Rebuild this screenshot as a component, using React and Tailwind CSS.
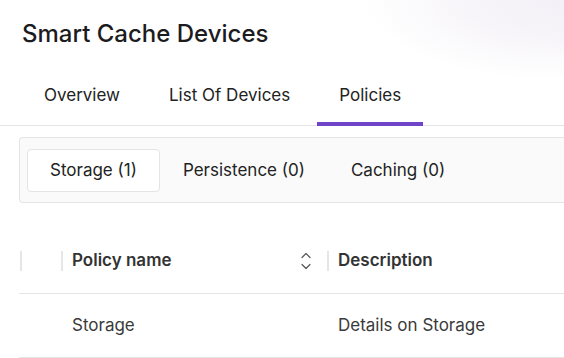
import React, { useState } from 'react';

const SortIcon = () => (
    <svg width="12" height="18" viewBox="0 0 12 18" fill="none" stroke="#555" strokeWidth="1.2" strokeLinecap="round" strokeLinejoin="round">
        <path d="M2 5.5 L6 1.5 L10 5.5" />
        <path d="M2 12.5 L6 16.5 L10 12.5" />
    </svg>
);

const App = () => {
    const [tab, setTab] = useState('Policies');
    const [sub, setSub] = useState('Storage');

    const tabs = ['Overview', 'List Of Devices', 'Policies'];
    const subs = [
        { name: 'Storage', count: 1 },
        { name: 'Persistence', count: 0 },
        { name: 'Caching', count: 0 },
    ];

    return (
        <div className="w-[564px] h-[358px] overflow-hidden bg-white bg-[radial-gradient(200px_80px_at_100%_0%,#f3f0f7_0%,#f7f5f9_50%,#ffffff_100%)] text-[#222] font-['Inter',sans-serif]">
            <h1 className="pl-[22px] pt-[18px] text-[24px] leading-[32px] font-medium text-[#1c1c1e]">Smart Cache Devices</h1>

            {/* main tabs */}
            <div className="mt-[35px] flex gap-[5px] pl-[22px] border-b border-[#e4e4e7]">
                {tabs.map(t => (
                    <button
                        key={t}
                        onClick={() => setTab(t)}
                        className={`-mb-px px-[22px] pb-[17px] text-[17px] leading-[20px] text-[#222] border-b-[4px] ${tab === t ? 'border-[#6e44c9]' : 'border-transparent'}`}
                    >
                        {t}
                    </button>
                ))}
            </div>

            {/* sub tabs */}
            <div className="ml-[19px] mt-[11px] h-[66px] flex items-center pl-[7px] bg-[#fafafa] border border-r-0 border-[#e4e4e7] rounded-l-[4px]">
                {subs.map(s => (
                    <button
                        key={s.name}
                        onClick={() => setSub(s.name)}
                        className={`h-[43px] px-[22px] text-[17px] leading-none text-[#222] rounded-[4px] border ${sub === s.name ? 'bg-white border-[#e4e4e7]' : 'border-transparent'}`}
                    >
                        {s.name} ({s.count})
                    </button>
                ))}
            </div>

            {/* table */}
            <div className="ml-[19px] mt-[26px]">
                <div className="flex items-center h-[65px] border-b border-[#e4e4e7] text-[17px] font-semibold text-[#333]">
                    <div className="ml-[1px] w-[41px] h-[20px] border-l-2 border-[#e6e6e8]" />
                    <div className="w-[266px] h-[20px] flex items-center justify-between pl-[9px] pr-[15px] border-l-2 border-[#e6e6e8]">
                        <span>Policy name</span>
                        <SortIcon />
                    </div>
                    <div className="flex-1 h-[20px] flex items-center pl-[9px] border-l-2 border-[#e6e6e8]">
                        <span>Description</span>
                    </div>
                </div>
                <div className="flex items-center h-[64px] border-b border-[#e4e4e7] text-[17px] text-[#3a3a3a]">
                    <div className="w-[42px]" />
                    <div className="w-[266px] pl-[11px]">Storage</div>
                    <div className="flex-1 pl-[11px]">Details on Storage</div>
                </div>
            </div>
        </div>
    );
};

export default App;
